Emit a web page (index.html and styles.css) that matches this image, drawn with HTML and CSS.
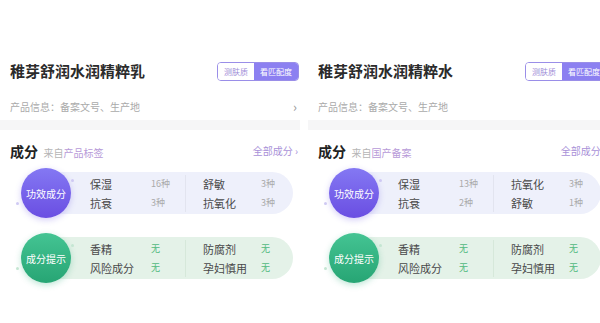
FILE: index.html
```html
<!DOCTYPE html>
<html lang="zh-CN">
<head>
    <meta charset="UTF-8">
    <meta name="viewport" content="width=device-width, initial-scale=1.0">
    <title>成分对比</title>
    <link rel="stylesheet" href="styles.css">
</head>
<body>
    <div class="panel">
        <div class="head">
            <h1 class="title">稚芽舒润水润精粹乳</h1>
            <div class="tags">
                <span class="tag">测肤质</span>
                <span class="tag active">看匹配度</span>
            </div>
        </div>
        <div class="info">
            <span>产品信息：备案文号、生产地</span>
            <span class="arrow">›</span>
        </div>
        <div class="band"></div>
        <div class="section">
            <div class="section-title">
                <b>成分</b>
                <span class="from">来自<em>产品标签</em></span>
            </div>
            <span class="all">全部成分 ›</span>
        </div>
        <div class="row purple">
            <div class="circle">功效成分</div>
            <div class="pill">
                <div class="group">
                    <span class="name">保湿</span><span class="count">16种</span>
                    <span class="name">抗衰</span><span class="count">3种</span>
                </div>
                <div class="group right">
                    <span class="name">舒敏</span><span class="count">3种</span>
                    <span class="name">抗氧化</span><span class="count">3种</span>
                </div>
            </div>
        </div>
        <div class="row green">
            <div class="circle">成分提示</div>
            <div class="pill">
                <div class="group">
                    <span class="name">香精</span><span class="count">无</span>
                    <span class="name">风险成分</span><span class="count">无</span>
                </div>
                <div class="group right">
                    <span class="name">防腐剂</span><span class="count">无</span>
                    <span class="name">孕妇慎用</span><span class="count">无</span>
                </div>
            </div>
        </div>
    </div>

    <div class="panel">
        <div class="head">
            <h1 class="title">稚芽舒润水润精粹水</h1>
            <div class="tags">
                <span class="tag">测肤质</span>
                <span class="tag active">看匹配度</span>
            </div>
        </div>
        <div class="info">
            <span>产品信息：备案文号、生产地</span>
            <span class="arrow">›</span>
        </div>
        <div class="band"></div>
        <div class="section">
            <div class="section-title">
                <b>成分</b>
                <span class="from">来自<em>国产备案</em></span>
            </div>
            <span class="all">全部成分 ›</span>
        </div>
        <div class="row purple">
            <div class="circle">功效成分</div>
            <div class="pill">
                <div class="group">
                    <span class="name">保湿</span><span class="count">13种</span>
                    <span class="name">抗衰</span><span class="count">2种</span>
                </div>
                <div class="group right">
                    <span class="name">抗氧化</span><span class="count">3种</span>
                    <span class="name">舒敏</span><span class="count">1种</span>
                </div>
            </div>
        </div>
        <div class="row green">
            <div class="circle">成分提示</div>
            <div class="pill">
                <div class="group">
                    <span class="name">香精</span><span class="count">无</span>
                    <span class="name">风险成分</span><span class="count">无</span>
                </div>
                <div class="group right">
                    <span class="name">防腐剂</span><span class="count">无</span>
                    <span class="name">孕妇慎用</span><span class="count">无</span>
                </div>
            </div>
        </div>
    </div>
</body>
</html>
```

FILE: styles.css
```css
* {
    padding: 0;
    margin: 0;
    box-sizing: border-box;
}

body {
    font-family: "Noto Sans CJK SC", "Noto Sans", sans-serif;
    background-color: #fff;
    color: #333;
    display: flex;
    gap: 8px;
    width: 600px;
    height: 323px;
    overflow: hidden;
}

.panel {
    flex: 0 0 300px;
    width: 300px;
    padding-top: 61px;
}

.head {
    display: flex;
    align-items: center;
    justify-content: space-between;
    height: 20px;
    padding-left: 10px;
    padding-right: 1px;
}

.title {
    font-size: 15px;
    font-weight: bold;
    color: #2b2b2b;
    line-height: 20px;
}

.tags {
    display: flex;
    height: 19px;
    border: 1px solid #9a8ee8;
    border-radius: 4px;
    overflow: hidden;
    font-size: 8px;
}

.tag {
    display: flex;
    align-items: center;
    padding: 0 6px;
    color: #a08dd8;
    background-color: #fff;
}

.tag.active {
    color: #fff;
    background-color: #8c80f1;
}

.info {
    display: flex;
    justify-content: space-between;
    align-items: center;
    height: 20px;
    margin-top: 15px;
    padding-left: 10px;
    padding-right: 3px;
    font-size: 10px;
    color: #aaa;
}

.arrow {
    font-size: 13px;
    color: #999;
}

.band {
    height: 10px;
    margin-top: 4px;
    background-color: #f6f6f7;
}

.section {
    display: flex;
    justify-content: space-between;
    align-items: center;
    height: 20px;
    margin-top: 10px;
    padding-left: 10px;
    padding-right: 2px;
}

.section-title b {
    font-size: 14px;
    color: #222;
}

.from {
    margin-left: 2px;
    font-size: 10px;
    color: #b5b5b5;
}

.from em {
    font-style: normal;
    color: #b79ad8;
}

.all {
    font-size: 10px;
    color: #a991d8;
}

.row {
    display: flex;
    align-items: center;
    margin-top: 8px;
    padding-left: 21px;
}

.row.green {
    margin-top: 15px;
}

.circle {
    position: relative;
    z-index: 1;
    flex: 0 0 50px;
    height: 50px;
    border-radius: 50%;
    display: flex;
    align-items: center;
    justify-content: center;
    font-size: 10px;
    color: #fff;
}

/* little sparkle dots around the circle */
.circle::before,
.circle::after {
    content: "";
    position: absolute;
    border-radius: 50%;
}

.circle::before {
    width: 3px;
    height: 3px;
    left: 50px;
    top: 11px;
}

.circle::after {
    width: 3px;
    height: 3px;
    left: -5px;
    top: 34px;
}

.purple .circle {
    background: linear-gradient(180deg, #8478f3 0%, #6a4ee2 100%);
    box-shadow: 0 2px 6px rgba(110, 90, 230, 0.3);
}

.purple .circle::before,
.purple .circle::after {
    background-color: #cfcaf3;
}

.green .circle {
    background: linear-gradient(180deg, #44c493 0%, #27a574 100%);
    box-shadow: 0 2px 6px rgba(40, 170, 120, 0.3);
}

.green .circle::before,
.green .circle::after {
    background-color: #c4e6d2;
}

.pill {
    display: flex;
    align-items: center;
    width: 247px;
    height: 42px;
    margin-left: -25px;
    padding-left: 44px;
    border-radius: 0 21px 21px 0;
}

.purple .pill {
    background-color: #eef0fb;
}

.green .pill {
    background-color: #e4f2e8;
}

.group {
    display: grid;
    grid-template-columns: 61px 34px;
    row-gap: 1px;
    font-size: 11px;
    line-height: 18px;
}

.group.right {
    grid-template-columns: 58px 30px;
    padding-left: 17px;
    border-left: 1px solid #e2e4ef;
}

.green .group.right {
    border-left-color: #d6e8da;
}

.name {
    color: #484848;
}

.count {
    font-size: 9px;
    color: #aaa;
}

.green .count {
    color: #52b97d;
}
```
